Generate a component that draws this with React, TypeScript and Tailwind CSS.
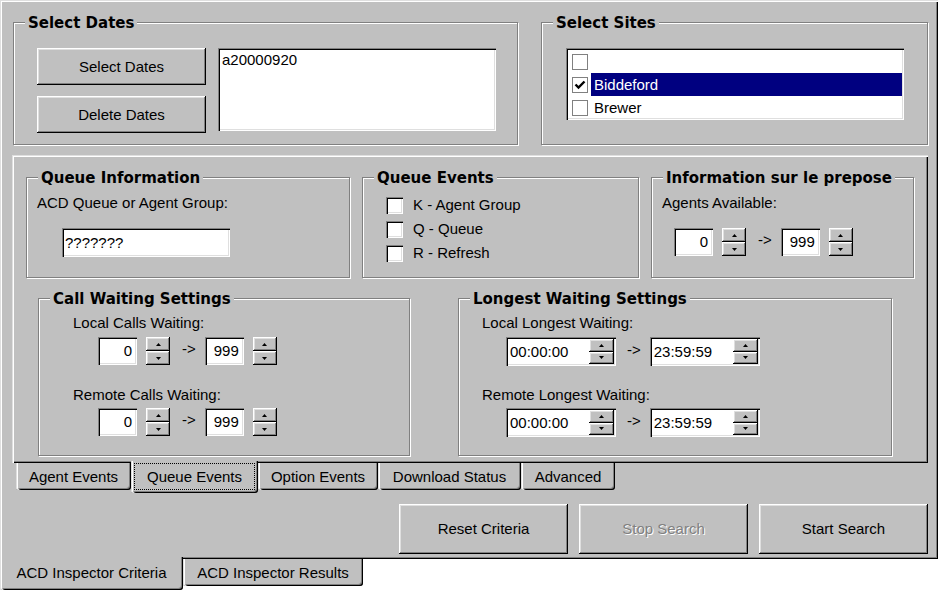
import React from "react";

const raised =
  "shadow-[inset_-1px_-1px_0_#000,inset_1px_1px_0_#fff,inset_-2px_-2px_0_#808080,inset_2px_2px_0_#dfdfdf]";
const sunken =
  "shadow-[inset_1px_1px_0_#808080,inset_2px_2px_0_#000,inset_-1px_-1px_0_#fff,inset_-2px_-2px_0_#dfdfdf]";
const panel =
  "shadow-[inset_1px_1px_0_#dfdfdf,inset_2px_2px_0_#fff,inset_-1px_-1px_0_#000,inset_-2px_-2px_0_#808080]";
const tabEdge =
  "shadow-[inset_1px_0_0_#dfdfdf,inset_2px_0_0_#fff,inset_-1px_-1px_0_#000,inset_-2px_-2px_0_#808080]";

function Group({
  title,
  className = "",
  children,
}: {
  title: string;
  className?: string;
  children?: React.ReactNode;
}) {
  return (
    <div
      className={`relative shrink-0 border border-[#808080] shadow-[inset_1px_1px_0_#fff,1px_1px_0_#fff] ${className}`}
    >
      <span className="absolute left-[11px] top-[-10px] whitespace-nowrap bg-[#c0c0c0] px-[3px] font-['DejaVu_Sans',sans-serif] text-[15px] font-bold leading-[20px]">
        {title}
      </span>
      {children}
    </div>
  );
}

function Arrow({ up }: { up?: boolean }) {
  return (
    <svg width="5" height="3" viewBox="0 0 5 3" className="block">
      {up ? <path d="M2.5 0L5 3H0Z" fill="#000" /> : <path d="M0 0H5L2.5 3Z" fill="#000" />}
    </svg>
  );
}

function Spin({ className = "" }: { className?: string }) {
  return (
    <div className={`flex shrink-0 flex-col ${className}`}>
      <div className={`flex flex-1 items-center justify-center bg-[#c0c0c0] ${raised}`}>
        <Arrow up />
      </div>
      <div className={`flex flex-1 items-center justify-center bg-[#c0c0c0] ${raised}`}>
        <Arrow />
      </div>
    </div>
  );
}

function NumRow({ a, b, className = "" }: { a: string; b: string; className?: string }) {
  return (
    <div className={`flex h-[28px] items-center ${className}`}>
      <div className={`flex h-full w-[39px] items-center justify-end bg-white pr-[5px] ${sunken}`}>{a}</div>
      <Spin className="ml-[9px] h-full w-[24px]" />
      <span className="-mt-[4px] ml-[12px]">-&gt;</span>
      <div className={`ml-[9px] flex h-full w-[39px] items-center justify-end bg-white pr-[5px] ${sunken}`}>
        {b}
      </div>
      <Spin className="ml-[9px] h-full w-[24px]" />
    </div>
  );
}

function TimeField({ v }: { v: string }) {
  return (
    <div className={`flex h-[29px] w-[110px] bg-white p-[2px] ${sunken}`}>
      <span className="flex flex-1 items-center pl-[2px]">{v}</span>
      <Spin className="w-[25px]" />
    </div>
  );
}

function TimeRow({ a, b, className = "" }: { a: string; b: string; className?: string }) {
  return (
    <div className={`flex items-center ${className}`}>
      <TimeField v={a} />
      <span className="-mt-[4px] ml-[11px]">-&gt;</span>
      <div className="ml-[9px]">
        <TimeField v={b} />
      </div>
    </div>
  );
}

function Button({
  children,
  className = "",
  disabled,
}: {
  children: React.ReactNode;
  className?: string;
  disabled?: boolean;
}) {
  return (
    <div
      className={`flex shrink-0 items-center justify-center bg-[#c0c0c0] ${raised} ${
        disabled ? "text-[#808080] [text-shadow:1px_1px_0_#fff]" : ""
      } ${className}`}
    >
      {children}
    </div>
  );
}

function Check3D({ label }: { label: string }) {
  return (
    <div className="flex h-[24px] items-center gap-[10px]">
      <div className={`h-[17px] w-[17px] bg-white ${sunken}`} />
      <span>{label}</span>
    </div>
  );
}

function FlatCheck({ checked }: { checked?: boolean }) {
  return (
    <div className="flex h-[16px] w-[16px] shrink-0 items-center justify-center border border-[#808080] bg-white">
      {checked && (
        <svg width="12" height="12" viewBox="0 0 12 12">
          <polyline points="1.5,5.5 4.5,8.5 10.5,2.5" fill="none" stroke="#000" strokeWidth="2.4" />
        </svg>
      )}
    </div>
  );
}

function BottomTab({
  label,
  className = "",
  selected,
  focus,
}: {
  label: string;
  className?: string;
  selected?: boolean;
  focus?: boolean;
}) {
  if (selected) {
    return (
      <div
        className={`relative z-10 flex shrink-0 rounded-b-[3px] bg-[#c0c0c0] px-[3px] pb-[3px] pt-[2px] ${tabEdge} ${className}`}
      >
        <span
          className={`flex flex-1 items-center justify-center ${
            focus ? "border border-dotted border-black" : ""
          }`}
        >
          {label}
        </span>
      </div>
    );
  }
  return (
    <div
      className={`flex shrink-0 items-center justify-center rounded-b-[3px] bg-[#c0c0c0] ${tabEdge} ${className}`}
    >
      {label}
    </div>
  );
}

export default function App() {
  return (
    <div className="h-[590px] w-[940px] overflow-hidden bg-white font-['Liberation_Sans',Arial,sans-serif] text-[15px] leading-[18px] text-black">
      {/* outer tab panel */}
      <div className={`flex h-[559px] w-[938px] flex-col bg-[#c0c0c0] pt-[22px] ${panel}`}>
        {/* top row */}
        <div className="flex gap-[23px] pl-[13px]">
          <Group title="Select Dates" className="flex h-[123px] w-[505px] gap-[12px] pl-[23px] pt-[25px]">
            <div className="flex flex-col gap-[11px]">
              <Button className="h-[37px] w-[169px]">Select Dates</Button>
              <Button className="h-[37px] w-[169px]">Delete Dates</Button>
            </div>
            <div className={`h-[83px] w-[278px] bg-white pl-[4px] pt-[3px] ${sunken}`}>a20000920</div>
          </Group>
          <Group title="Select Sites" className="h-[123px] w-[387px] pl-[24px] pt-[25px]">
            <div className={`flex h-[72px] w-[338px] flex-col overflow-hidden bg-white p-[2px] ${sunken}`}>
              <div className="flex h-[23px] shrink-0 items-center pl-[4px]">
                <FlatCheck />
              </div>
              <div className="flex h-[23px] shrink-0 items-center pl-[4px]">
                <FlatCheck checked />
                <div className="ml-[3px] flex h-full flex-1 items-center bg-[#000080] pl-[3px] text-white">
                  Biddeford
                </div>
              </div>
              <div className="flex h-[23px] shrink-0 items-center pl-[4px]">
                <FlatCheck />
                <span className="ml-[6px]">Brewer</span>
              </div>
            </div>
          </Group>
        </div>

        {/* inner tab control */}
        <div className="ml-[12px] mt-[10px] flex w-[916px] flex-col">
          <div className={`h-[308px] bg-[#c0c0c0] pl-[14px] pt-[22px] ${panel}`}>
            <div className="flex gap-[12px]">
              <Group title="Queue Information" className="h-[101px] w-[324px] pl-[10px] pt-[16px]">
                <div>ACD Queue or Agent Group:</div>
                <div className={`ml-[25px] mt-[16px] flex h-[29px] w-[168px] items-center bg-white pl-[3px] ${sunken}`}>
                  ???????
                </div>
              </Group>
              <Group title="Queue Events" className="flex h-[101px] w-[277px] flex-col pl-[23px] pt-[15px]">
                <Check3D label="K - Agent Group" />
                <Check3D label="Q - Queue" />
                <Check3D label="R - Refresh" />
              </Group>
              <Group title="Information sur le prepose" className="h-[101px] w-[263px] pl-[10px] pt-[16px]">
                <div>Agents Available:</div>
                <NumRow a="0" b="999" className="ml-[12px] mt-[16px]" />
              </Group>
            </div>
            <div className="ml-[12px] mt-[20px] flex gap-[48px]">
              <Group title="Call Waiting Settings" className="h-[158px] w-[372px] pl-[34px] pt-[15px]">
                <div>Local Calls Waiting:</div>
                <NumRow a="0" b="999" className="ml-[25px] mt-[5px]" />
                <div className="mt-[21px]">Remote Calls Waiting:</div>
                <NumRow a="0" b="999" className="ml-[25px] mt-[4px]" />
              </Group>
              <Group title="Longest Waiting Settings" className="h-[158px] w-[434px] pl-[23px] pt-[15px]">
                <div>Local Longest Waiting:</div>
                <TimeRow a="00:00:00" b="23:59:59" className="ml-[24px] mt-[5px]" />
                <div className="mt-[20px]">Remote Longest Waiting:</div>
                <TimeRow a="00:00:00" b="23:59:59" className="ml-[24px] mt-[4px]" />
              </Group>
            </div>
          </div>
          <div className="flex items-start pl-[4px]">
            <BottomTab label="Agent Events" className="h-[27px] w-[115px]" />
            <BottomTab label="Queue Events" selected focus className="-mt-[2px] h-[32px] w-[127px]" />
            <BottomTab label="Option Events" className="h-[27px] w-[120px]" />
            <BottomTab label="Download Status" className="h-[27px] w-[143px]" />
            <BottomTab label="Advanced" className="h-[27px] w-[94px]" />
          </div>
        </div>

        {/* action buttons */}
        <div className="mt-[11px] flex justify-end gap-[11px] pr-[10px]">
          <Button className="h-[50px] w-[169px]">Reset Criteria</Button>
          <Button className="h-[50px] w-[169px]" disabled>
            Stop Search
          </Button>
          <Button className="h-[50px] w-[169px]">Start Search</Button>
        </div>
      </div>

      {/* outer tabs */}
      <div className="flex items-start">
        <BottomTab label="ACD Inspector Criteria" selected className="-mt-[2px] h-[33px] w-[183px]" />
        <BottomTab label="ACD Inspector Results" className="h-[27px] w-[180px]" />
      </div>
    </div>
  );
}
